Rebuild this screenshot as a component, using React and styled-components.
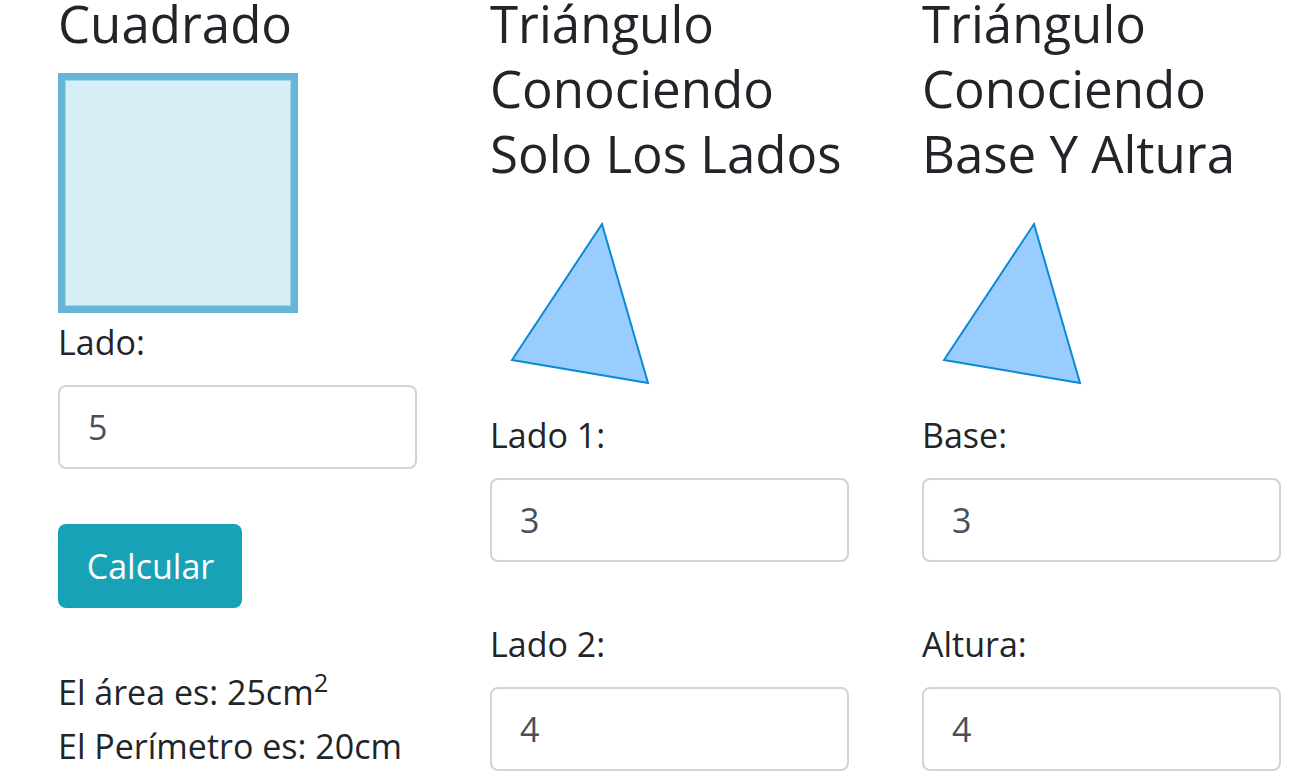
import React from 'react'
import styled, { createGlobalStyle } from 'styled-components'

const GlobalStyle = createGlobalStyle`
    * {
        box-sizing: border-box;
    }
    body {
        margin: 0;
        background: #fff;
        color: #212529;
        font-family: "Open Sans", "Noto Sans", sans-serif;
        font-size: 34px;
        line-height: 54px;
        overflow: hidden;
    }
`

const Page = styled.main`
    display: grid;
    grid-template-columns: repeat(3, 359px);
    column-gap: 73px;
    padding-left: 58px;
    align-items: start;
`

const Column = styled.section`
    display: flex;
    flex-direction: column;
    align-items: flex-start;
`

const Title = styled.h2`
    margin: -9px 0 0;
    font-size: 51px;
    font-weight: 400;
    line-height: 65px;
    color: #212529;
`

const Square = styled.div`
    width: 240px;
    height: 240px;
    margin: 17px 0 2px;
    background: #d6eff6;
    border: 7px solid #68b6d6;
    box-shadow: inset 0 0 0 1px #a2d6e8;
`

const Shape = styled.svg`
    display: block;
    width: 200px;
    height: 222px;
`

const Field = styled.div`
    display: flex;
    flex-direction: column;
    align-items: flex-start;
    width: 100%;
    margin-bottom: 55px;
`

const Label = styled.label`
    display: block;
    margin-bottom: 16px;
`

const Input = styled.input`
    display: block;
    width: 100%;
    height: 84px;
    padding: 0 28px;
    font-family: inherit;
    font-size: 34px;
    color: #495057;
    background: #fff;
    border: 2px solid #d0d4d9;
    border-radius: 8px;
    outline: none;
`

const Button = styled.button`
    width: 184px;
    height: 84px;
    margin-bottom: 57px;
    padding: 0 0 0 1px;
    font-family: inherit;
    font-size: 34px;
    line-height: 54px;
    color: #fff;
    background: #17a2b8;
    border: none;
    border-radius: 8px;
    cursor: pointer;
`

const Result = styled.p`
    margin: 0;

    sup {
        position: relative;
        top: -0.5em;
        vertical-align: baseline;
        font-size: 0.75em;
        line-height: 0;
    }
`

const Triangle = () => (
    <Shape viewBox="0 0 200 222">
        <polygon
            points="22,174 112,38 158,197"
            fill="#99ccff"
            stroke="#0a8ad4"
            strokeWidth="2"
            strokeLinejoin="miter"
        />
    </Shape>
)

const InputField = ({ label, value }) => (
    <Field>
        <Label>{label}</Label>
        <Input type="number" defaultValue={value} />
    </Field>
)

const App = () => {
    return (
        <>
            <GlobalStyle />
            <Page>
                <Column>
                    <Title>Cuadrado</Title>
                    <Square />
                    <InputField label="Lado:" value="5" />
                    <Button>Calcular</Button>
                    <Result>El área es: 25cm<sup>2</sup></Result>
                    <Result>El Perímetro es: 20cm</Result>
                </Column>
                <Column>
                    <Title>Triángulo Conociendo Solo Los Lados</Title>
                    <Triangle />
                    <InputField label="Lado 1:" value="3" />
                    <InputField label="Lado 2:" value="4" />
                </Column>
                <Column>
                    <Title>Triángulo Conociendo Base Y Altura</Title>
                    <Triangle />
                    <InputField label="Base:" value="3" />
                    <InputField label="Altura:" value="4" />
                </Column>
            </Page>
        </>
    )
}

export default App
